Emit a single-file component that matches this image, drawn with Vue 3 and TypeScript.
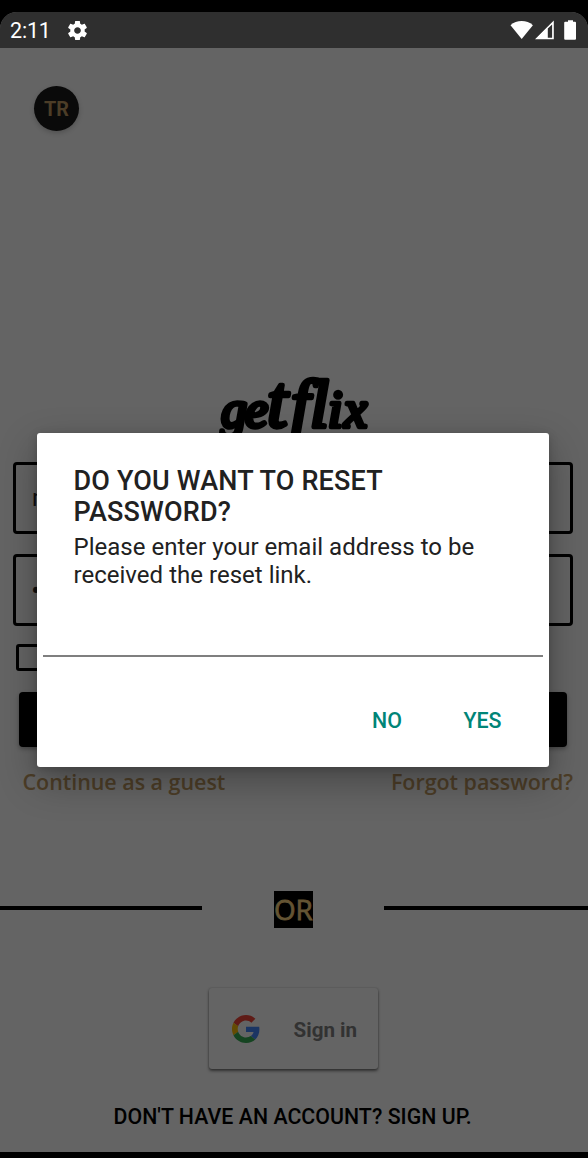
<script setup lang="ts">
import { ref } from 'vue'

const email = ref('m')
const password = ref('•')
const resetEmail = ref('')
const dialogOpen = ref(true)
</script>

<template>
  <div class="device">
    <div class="screen">
      <header class="status">
        <span class="clock">2:11</span>
        <svg class="gear" viewBox="0 0 24 24" width="23" height="23">
          <path fill="#fff" fill-rule="evenodd" d="M19.43 12.98c.04-.32.07-.64.07-.98s-.03-.66-.07-.98l2.11-1.65c.19-.15.24-.42.12-.64l-2-3.46c-.12-.22-.39-.3-.61-.22l-2.49 1c-.52-.4-1.08-.73-1.69-.98l-.38-2.65C14.46 2.18 14.25 2 14 2h-4c-.25 0-.46.18-.49.42l-.38 2.65c-.61.25-1.17.59-1.69.98l-2.49-1c-.23-.09-.49 0-.61.22l-2 3.46c-.13.22-.07.49.12.64l2.11 1.65c-.04.32-.07.65-.07.98s.03.66.07.98l-2.11 1.65c-.19.15-.24.42-.12.64l2 3.46c.12.22.39.3.61.22l2.49-1c.52.4 1.08.73 1.69.98l.38 2.65c.03.24.24.42.49.42h4c.25 0 .46-.18.49-.42l.38-2.65c.61-.25 1.17-.59 1.69-.98l2.49 1c.23.09.49 0 .61-.22l2-3.46c.12-.22.07-.49-.12-.64l-2.11-1.65zM12 15.500c-1.930 0-3.500-1.570-3.500-3.500s1.570-3.500 3.500-3.500 3.500 1.570 3.500 3.500-1.570 3.500-3.500 3.500z" />
        </svg>
        <svg class="signals" viewBox="0 0 68 22" width="68" height="22">
          <path fill="#fff" d="M.5 5.2C6.5-.4 16.900-.4 22.900 5.200L11.700 19z" />
          <path fill="#fff" fill-rule="evenodd" d="M25 19.300L43.800.5v18.800zM37.800 8.500v9.300h4.300V4.500z" />
          <path fill="#fff" d="M58 .2h5v1.500h2q1 0 1 1v16q0 1-1 1h-9.800q-1 0-1-1v-16q0-1 1-1H58z" />
        </svg>
      </header>

      <main class="login">
        <button class="lang">TR</button>

        <svg class="logo" viewBox="0 0 160 70" width="160" height="70">
          <text x="3 27 49 73 92 110 126" y="52">ge<tspan class="mid">t</tspan><tspan class="tall">fl</tspan>ix</text>
        </svg>

        <div class="field"><span>{{ email }}</span></div>
        <div class="field second"><span class="dots">{{ password }}</span></div>
        <div class="checkbox"></div>
        <div class="submit"></div>

        <nav class="links">
          <a>Continue as a guest</a>
          <a>Forgot password?</a>
        </nav>

        <div class="divider">
          <i></i>
          <span>OR</span>
          <i></i>
        </div>

        <button class="google">
          <svg viewBox="0 0 48 48" width="28" height="28">
            <path fill="#5f1b16" d="M24 9.500c3.540 0 6.710 1.220 9.210 3.600l6.850-6.850C35.900 2.380 30.470 0 24 0 14.620 0 6.510 5.380 2.560 13.220l7.980 6.190C12.430 13.720 17.740 9.500 24 9.500z" />
            <path fill="#1b3563" d="M46.980 24.550c0-1.570-.15-3.090-.38-4.550H24v9.020h12.940c-.58 2.960-2.260 5.480-4.780 7.180l7.730 6c4.510-4.180 7.090-10.360 7.090-17.650z" />
            <path fill="#644b02" d="M10.530 28.590c-.48-1.450-.76-2.990-.76-4.590s.27-3.140.76-4.590l-7.980-6.190C.92 16.460 0 20.120 0 24s.92 7.540 2.560 10.780l7.970-6.190z" />
            <path fill="#154421" d="M24 48c6.480 0 11.930-2.130 15.890-5.810l-7.730-6c-2.150 1.450-4.920 2.300-8.160 2.300-6.260 0-11.570-4.220-13.470-9.910l-7.980 6.190C6.510 42.620 14.620 48 24 48z" />
          </svg>
          <span>Sign in</span>
        </button>

        <p class="signup">DON'T HAVE AN ACCOUNT? SIGN UP.</p>
      </main>
    </div>

    <div v-if="dialogOpen" class="dialog">
      <h2>DO YOU WANT TO RESET<br />PASSWORD?</h2>
      <p>Please enter your email address to be<br />received the reset link.</p>
      <input v-model="resetEmail" type="email" />
      <div class="actions">
        <button @click="dialogOpen = false">NO</button>
        <button @click="dialogOpen = false">YES</button>
      </div>
    </div>
  </div>
</template>

<style>
body {
  margin: 0;
  background: #000;
}
</style>

<style scoped>
* {
  box-sizing: border-box;
}
.device {
  position: relative;
  width: 588px;
  height: 1158px;
  padding-top: 12px;
  background: #000;
  font-family: Roboto, "Liberation Sans", sans-serif;
  overflow: hidden;
}
button {
  border: 0;
  padding: 0;
  background: none;
  font-family: inherit;
}
.screen {
  height: 1140px;
  border-radius: 17px 17px 0 0;
  background: #646464;
  overflow: hidden;
}
.status {
  display: flex;
  align-items: center;
  height: 36px;
  padding: 0 10px 0 10px;
  background: #2f2f2f;
  color: #fff;
}
.clock {
  width: 56px;
  padding-top: 2px;
  font-size: 21.500px;
  line-height: 34px;
  letter-spacing: -0.2px;
}
.signals {
  margin: 1px 0 0 auto;
}
.login {
  display: flex;
  flex-direction: column;
}
.lang {
  width: 45px;
  height: 45px;
  margin: 38px 0 0 34px;
  padding-top: 1px;
  border-radius: 50%;
  background: #0a0a0a;
  color: #4c3d27;
  font-size: 19.800px;
  font-weight: 700;
  box-shadow: 0 2px 5px rgba(0, 0, 0, 0.2);
}
.logo {
  margin: 244px 0 0 218px;
  overflow: visible;
  font: italic 400 52px "Liberation Serif", serif;
  stroke: #000;
  stroke-width: 4.500;
  stroke-linejoin: round;
}
.mid {
  font-size: 74px;
}
.tall {
  font-size: 68px;
}
.field {
  width: 560px;
  height: 72px;
  margin: 17px 0 0 13px;
  padding-left: 16px;
  border: 3px solid #000;
  border-radius: 4px;
  color: #111;
  font-size: 24px;
  line-height: 67px;
}
.second {
  margin-top: 20px;
}
.dots {
  display: inline-block;
  margin-left: -1px;
  font-size: 30px;
}
.checkbox {
  width: 27px;
  height: 27px;
  margin: 18px 0 0 16px;
  border: 3px solid #000;
  border-radius: 3px;
}
.submit {
  width: 548px;
  height: 55px;
  margin: 21px 0 0 19px;
  border-radius: 4px;
  background: #000;
  box-shadow: 0 2px 4px rgba(0, 0, 0, 0.3);
}
.links {
  display: flex;
  justify-content: space-between;
  margin-top: 20px;
  padding: 0 15px 0 22.500px;
  color: #4c3d27;
  font: 600 21.500px/29px "Open Sans", sans-serif;
  letter-spacing: -0.05px;
}
.divider {
  display: flex;
  align-items: center;
  justify-content: space-between;
  height: 37px;
  margin-top: 95px;
}
.divider i {
  width: 202px;
  height: 4px;
  margin-top: -3px;
  background: #000;
}
.divider i:last-child {
  width: 204px;
}
.divider span {
  width: 39px;
  margin-left: 1px;
  background: #000;
  color: #645433;
  font: 400 27.800px/37px "Open Sans", sans-serif;
  -webkit-text-stroke: 0.8px #645433;
}
.google {
  display: flex;
  align-items: center;
  width: 169px;
  height: 81px;
  margin: 60px 0 0 209px;
  padding-left: 22.500px;
  border-radius: 3px;
  background: #646464;
  color: #323232;
  font-size: 20.600px;
  font-weight: 700;
  box-shadow: 0 2px 3px rgba(0, 0, 0, 0.5), 0 0 2px rgba(0, 0, 0, 0.2);
}
.google span {
  margin: 2px 0 0 34px;
}
.signup {
  margin: 35px 0 0 113.500px;
  color: #000;
  font-size: 21.300px;
  font-weight: 500;
  line-height: 26px;
  letter-spacing: 0.050px;
  white-space: nowrap;
}
.dialog {
  position: absolute;
  left: 37px;
  top: 433px;
  width: 512px;
  height: 334px;
  padding: 33px 6px 0;
  border-radius: 3px;
  background: #fff;
  color: #212121;
  box-shadow: 0 14px 38px rgba(0, 0, 0, 0.3), 0 2px 10px rgba(0, 0, 0, 0.18);
}
.dialog h2 {
  margin: 0 0 0 30.500px;
  font-size: 27px;
  font-weight: 500;
  line-height: 31px;
  letter-spacing: 0.180px;
  white-space: nowrap;
}
.dialog p {
  margin: 5px 0 0 30.500px;
  font-size: 24px;
  line-height: 28px;
  letter-spacing: 0.020px;
  white-space: nowrap;
}
.dialog input {
  display: block;
  width: 500px;
  height: 68px;
  padding: 0 4px;
  border: 0;
  border-bottom: 2px solid #7f7f7f;
  outline: 0;
  background: none;
}
.actions {
  display: flex;
  justify-content: flex-end;
  gap: 61.500px;
  margin-top: 50px;
  padding-right: 41.500px;
}
.actions button {
  color: #008577;
  font-size: 21.400px;
  font-weight: 500;
  line-height: 27px;
}
</style>
